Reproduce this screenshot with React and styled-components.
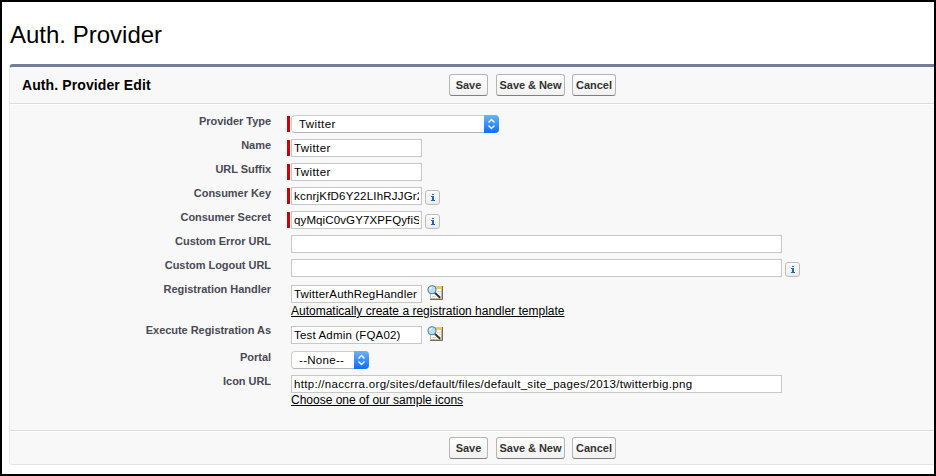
import React from "react";
import styled, { createGlobalStyle } from "styled-components";

const GlobalStyle = createGlobalStyle`
  * { box-sizing: border-box; }
  body { margin: 0; background: #fff; font-family: "Liberation Sans", Arial, sans-serif; }
`;

const Frame = styled.main`
  width: 936px;
  height: 476px;
  border: 2px solid #000;
  background: #fff;
  overflow: hidden;
  padding-left: 7px;
`;

const PageTitle = styled.h1`
  margin: 0;
  height: 62px;
  padding: 18px 0 0 1px;
  font-size: 24px;
  line-height: 29px;
  font-weight: 400;
  color: #000;
  white-space: nowrap;
`;

const Panel = styled.section`
  height: 401px;
  display: flex;
  flex-direction: column;
  background: #f8f8f8;
  border-left: 1px solid #eaeaea;
  border-bottom: 1px solid #e3e3e3;
  border-top: 3px solid #747e96;
  border-radius: 4px 0 0 4px;
`;

const Header = styled.header`
  height: 37px;
  flex: none;
  display: flex;
  align-items: flex-start;
  padding-top: 7px;
  border-bottom: 1px solid #dbdbdb;
`;

const PanelTitle = styled.h2`
  margin: 0;
  width: 439px;
  padding-left: 12px;
  font-size: 14px;
  line-height: 22px;
  letter-spacing: 0.1px;
  color: #000;
`;

const Footer = styled.footer`
  height: 34px;
  flex: none;
  display: flex;
  align-items: flex-start;
  padding: 6px 0 0 439px;
  border-top: 1px solid #dbdbdb;
  box-shadow: inset 0 1px #fff;
`;

const Actions = styled.div`
  display: flex;
  gap: 7px;
`;

const Button = styled.button`
  width: ${(p) => p.$w}px;
  height: 22px;
  padding: 0;
  border: 1px solid #b5b5b5;
  border-bottom-color: #7f7f7f;
  border-radius: 3px;
  background: linear-gradient(#fff, #f1f1f1);
  color: #333;
  font: bold 11px/18px "Liberation Sans", Arial, sans-serif;
  letter-spacing: -0.05px;
  white-space: nowrap;

  &:first-child { margin-right: 1px; }
`;

const Form = styled.form`
  flex: 1;
  padding-top: 8px;
  box-shadow: inset 0 1px #fff;
`;

const Row = styled.div`
  display: flex;
  height: ${(p) => p.$h || 24}px;
`;

const Label = styled.label`
  width: 261px;
  flex: none;
  text-align: right;
  font-size: 11px;
  line-height: 19px;
  font-weight: 700;
  color: #4a4a56;
  letter-spacing: -0.04px;
`;

const Field = styled.div`
  padding: ${(p) => p.$top || 3}px 0 0 16px;
`;

const Control = styled.div`
  display: flex;
  height: 18px;
`;

const Required = styled.span`
  width: 3px;
  height: 16px;
  margin: 1px 1px 0 0;
  background: ${(p) => (p.$on ? "#c00" : "transparent")};
`;

const TextBox = styled.input`
  width: ${(p) => (p.$wide ? 491 : 131)}px;
  height: 18px;
  border: 1px solid #c8c8c8;
  border-radius: 0;
  padding: 0 2px 1px;
  margin: 0;
  outline: 0;
  background: #fff;
  color: #000;
  font: 11.5px/15px "Liberation Sans", Arial, sans-serif;
  letter-spacing: ${(p) => p.$ls || 0}px;
`;

const SelectBox = styled.div`
  display: flex;
  justify-content: space-between;
  width: ${(p) => p.$w}px;
  height: 18px;
  border: 1px solid #cdcdcd;
  border-bottom-color: #b4b4b4;
  border-right: 0;
  border-radius: 4px;
  background: #fff;
  padding-left: 7px;
  font-size: 11.5px;
  line-height: 17px;
  color: #000;
  letter-spacing: ${(p) => p.$ls || 0}px;
`;

const Stepper = styled.span`
  width: 15px;
  height: 18px;
  margin-top: -1px;
  border-radius: 0 4px 4px 0;
  background: linear-gradient(#6cb3fa, #0d6dff);
  svg { display: block; }
`;

const InfoBadge = styled.span`
  width: 15px;
  height: 15px;
  margin: 3px 0 0 3px;
  border: 1px solid #bcbcbc;
  border-radius: 3px;
  background: linear-gradient(#fff, #ececec);
  svg { display: block; }
`;

const LookupSlot = styled.span`
  margin: 0 0 0 5px;
  svg { display: block; }
`;

const HelpLink = styled.a`
  display: block;
  width: max-content;
  margin: ${(p) => (p.$tight ? 0 : 1)}px 0 0 4px;
  font-size: 12px;
  line-height: 14px;
  color: #000;
  text-decoration: underline;
  white-space: nowrap;
`;

const Info = () => (
  <InfoBadge>
    <svg width="13" height="13" viewBox="0 0 13 13" shapeRendering="crispEdges">
      <path d="M6 3h2v1H6zM5 5h3v4h1v1H5V9h1V6H5z" fill="#1d66c4" />
    </svg>
  </InfoBadge>
);

const Lookup = () => (
  <LookupSlot>
    <svg width="16" height="16" viewBox="0 0 16 16">
      <path d="M3.5 1.5h11v12h-11z" fill="#fffdf6" stroke="#c9b68e" />
      <path d="M15.5 1v13.5H3" fill="none" stroke="#6f6b67" />
      <path d="M8 1h7v3H8z" fill="#f3c65c" />
      <path d="M10 6.5h4M5 11.5h4M12 8.5h2" stroke="#d8d8d8" />
      <path d="M7.8 7.8l5.4 5" stroke="#333" strokeWidth="2" />
      <circle cx="5" cy="4.8" r="4" fill="#b5dff5" stroke="#527f9e" strokeWidth="1.1" />
      <path d="M2.8 4.8q.2-2.2 2.3-2.2" fill="none" stroke="#fff" strokeWidth="1.3" />
    </svg>
  </LookupSlot>
);

const Select = ({ width, value, ls }) => (
  <SelectBox $w={width} $ls={ls}>
    {value}
    <Stepper>
      <svg width="15" height="18" viewBox="0 0 15 18">
        <path d="M4.5 7.4l3-3 3 3M4.5 10.6l3 3 3-3" fill="none" stroke="#fff" strokeWidth="1.4" />
      </svg>
    </Stepper>
  </SelectBox>
);

const Buttons = () => (
  <Actions>
    <Button type="button" $w={39}>Save</Button>
    <Button type="button" $w={69}>Save &amp; New</Button>
    <Button type="button" $w={44}>Cancel</Button>
  </Actions>
);

const fields = [
  { label: "Provider Type", select: 208, value: "Twitter", required: true, ls: 0.4 },
  { label: "Name", value: "Twitter", required: true, ls: 0.4 },
  { label: "URL Suffix", value: "Twitter", required: true, ls: 0.4 },
  { label: "Consumer Key", value: "kcnrjKfD6Y22LIhRJJGr2", required: true, info: true, ls: 0.2 },
  { label: "Consumer Secret", value: "qyMqiC0vGY7XPFQyfiSx", required: true, info: true, ls: 0.12 },
  { label: "Custom Error URL", value: "", wide: true },
  { label: "Custom Logout URL", value: "", wide: true, info: true },
  { label: "Registration Handler", value: "TwitterAuthRegHandler", lookup: true, h: 41, top: 5, ls: 0.2, link: "Automatically create a registration handler template" },
  { label: "Execute Registration As", value: "Test Admin (FQA02)", lookup: true, h: 27, top: 5, ls: 0.17 },
  { label: "Portal", select: 78, value: "--None--", ls: 0.3 },
  { label: "Icon URL", value: "http://naccrra.org/sites/default/files/default_site_pages/2013/twitterbig.png", wide: true, ls: 0.3, h: 41, link: "Choose one of our sample icons", tight: true },
];

export default function App() {
  return (
    <>
      <GlobalStyle />
      <Frame>
        <PageTitle>Auth. Provider</PageTitle>
        <Panel>
          <Header>
            <PanelTitle>Auth. Provider Edit</PanelTitle>
            <Buttons />
          </Header>
          <Form>
            {fields.map((f) => (
              <Row key={f.label} $h={f.h}>
                <Label>{f.label}</Label>
                <Field $top={f.top}>
                  <Control>
                    <Required $on={f.required} />
                    {f.select ? (
                      <Select width={f.select} value={f.value} ls={f.ls} />
                    ) : (
                      <TextBox aria-label={f.label} defaultValue={f.value} $wide={f.wide} $ls={f.ls} />
                    )}
                    {f.info && <Info />}
                    {f.lookup && <Lookup />}
                  </Control>
                  {f.link && <HelpLink $tight={f.tight}>{f.link}</HelpLink>}
                </Field>
              </Row>
            ))}
          </Form>
          <Footer>
            <Buttons />
          </Footer>
        </Panel>
      </Frame>
    </>
  );
}
